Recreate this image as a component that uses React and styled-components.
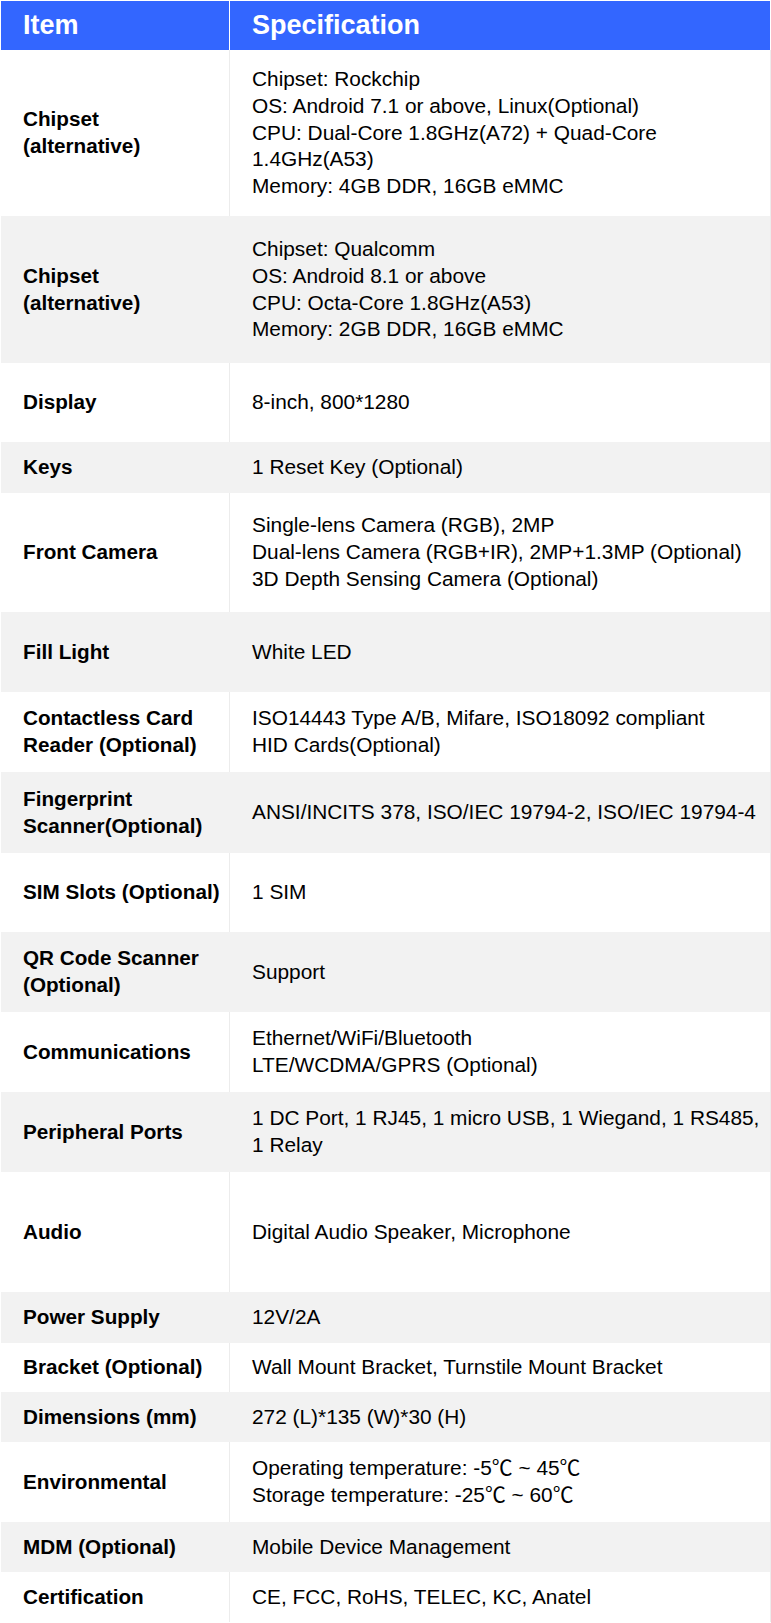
import React from 'react';
import styled, { createGlobalStyle } from 'styled-components';

const GlobalStyle = createGlobalStyle`
  html, body {
    margin: 0;
    padding: 0;
    background: #ffffff;
  }
  body {
    font-family: "Liberation Sans", Arial, "Noto Sans CJK SC", sans-serif;
    color: #000;
  }
`;

const Table = styled.div`
  width: 770px;
  padding-top: 1px;
  padding-left: 1px;
  display: flex;
  flex-direction: column;
`;

const HeadRow = styled.div`
  display: flex;
  height: 49px;
  background: #3366ff;
  width: 769px;
  border-right: 1px solid #ffffff;
`;

const HeadCell = styled.div`
  display: flex;
  align-items: center;
  box-sizing: border-box;
  width: ${p => p.w}px;
  padding-left: 22px;
  font-size: 27px;
  font-weight: bold;
  color: #ffffff;
  border-right: ${p => (p.divider ? '1px solid #ffffff' : 'none')};
`;

const Row = styled.div`
  display: flex;
  width: 769px;
  height: ${p => p.h}px;
  background: ${p => (p.alt ? '#f2f2f2' : '#ffffff')};
  border-right: 1px solid #ececec;
`;

const ItemCell = styled.div`
  display: flex;
  flex-direction: column;
  justify-content: center;
  box-sizing: border-box;
  width: 229px;
  padding-left: 22px;
  border-right: 1px solid ${p => (p.alt ? '#f2f2f2' : '#ececec')};
  font-size: 20.7px;
  font-weight: bold;
  line-height: 26.7px;
  white-space: nowrap;
`;

const SpecCell = styled.div`
  display: flex;
  flex-direction: column;
  justify-content: center;
  box-sizing: border-box;
  flex: 1;
  padding-left: 22px;
  font-size: 20.85px;
  line-height: 26.7px;
  white-space: nowrap;
`;

const Line = styled.span`
  display: block;
`;

const rows = [
  {
    item: ['Chipset', '(alternative)'],
    spec: [
      'Chipset: Rockchip',
      'OS: Android 7.1 or above, Linux(Optional)',
      'CPU: Dual-Core 1.8GHz(A72) + Quad-Core',
      '1.4GHz(A53)',
      'Memory: 4GB DDR, 16GB eMMC',
    ],
    h: 166,
  },
  {
    item: ['Chipset', '(alternative)'],
    spec: [
      'Chipset: Qualcomm',
      'OS: Android 8.1 or above',
      'CPU: Octa-Core 1.8GHz(A53)',
      'Memory: 2GB DDR, 16GB eMMC',
    ],
    h: 147,
  },
  { item: ['Display'], spec: ['8-inch, 800*1280'], h: 79 },
  { item: ['Keys'], spec: ['1 Reset Key (Optional)'], h: 51 },
  {
    item: ['Front Camera'],
    spec: [
      'Single-lens Camera (RGB), 2MP',
      'Dual-lens Camera (RGB+IR), 2MP+1.3MP (Optional)',
      '3D Depth Sensing Camera (Optional)',
    ],
    h: 119,
  },
  { item: ['Fill Light'], spec: ['White LED'], h: 80 },
  {
    item: ['Contactless Card', 'Reader (Optional)'],
    spec: ['ISO14443 Type A/B, Mifare, ISO18092 compliant', 'HID Cards(Optional)'],
    h: 80,
  },
  {
    item: ['Fingerprint', 'Scanner(Optional)'],
    spec: ['ANSI/INCITS 378, ISO/IEC 19794-2, ISO/IEC 19794-4'],
    h: 81,
  },
  { item: ['SIM Slots (Optional)'], spec: ['1 SIM'], h: 79 },
  { item: ['QR Code Scanner', '(Optional)'], spec: ['Support'], h: 80 },
  {
    item: ['Communications'],
    spec: ['Ethernet/WiFi/Bluetooth', 'LTE/WCDMA/GPRS (Optional)'],
    h: 80,
  },
  {
    item: ['Peripheral Ports'],
    spec: ['1 DC Port, 1 RJ45, 1 micro USB, 1 Wiegand, 1 RS485,', '1 Relay'],
    h: 80,
  },
  { item: ['Audio'], spec: ['Digital Audio Speaker, Microphone'], h: 120 },
  { item: ['Power Supply'], spec: ['12V/2A'], h: 51 },
  { item: ['Bracket (Optional)'], spec: ['Wall Mount Bracket, Turnstile Mount Bracket'], h: 49 },
  { item: ['Dimensions (mm)'], spec: ['272 (L)*135 (W)*30 (H)'], h: 50 },
  {
    item: ['Environmental'],
    spec: ['Operating temperature: -5℃ ~ 45℃', 'Storage temperature: -25℃ ~ 60℃'],
    h: 80,
  },
  { item: ['MDM (Optional)'], spec: ['Mobile Device Management'], h: 50 },
  { item: ['Certification'], spec: ['CE, FCC, RoHS, TELEC, KC, Anatel'], h: 50 },
];

const App = () => {
  return (
    <>
      <GlobalStyle />
      <Table>
        <HeadRow>
          <HeadCell w={229} divider>Item</HeadCell>
          <HeadCell w={540}>Specification</HeadCell>
        </HeadRow>
        {rows.map((row, i) => {
          const alt = i % 2 === 1;
          return (
            <Row key={i} h={row.h} alt={alt}>
              <ItemCell alt={alt}>
                {row.item.map((t, j) => (
                  <Line key={j}>{t}</Line>
                ))}
              </ItemCell>
              <SpecCell>
                {row.spec.map((t, j) => (
                  <Line key={j}>{t}</Line>
                ))}
              </SpecCell>
            </Row>
          );
        })}
      </Table>
    </>
  );
};

export default App;
